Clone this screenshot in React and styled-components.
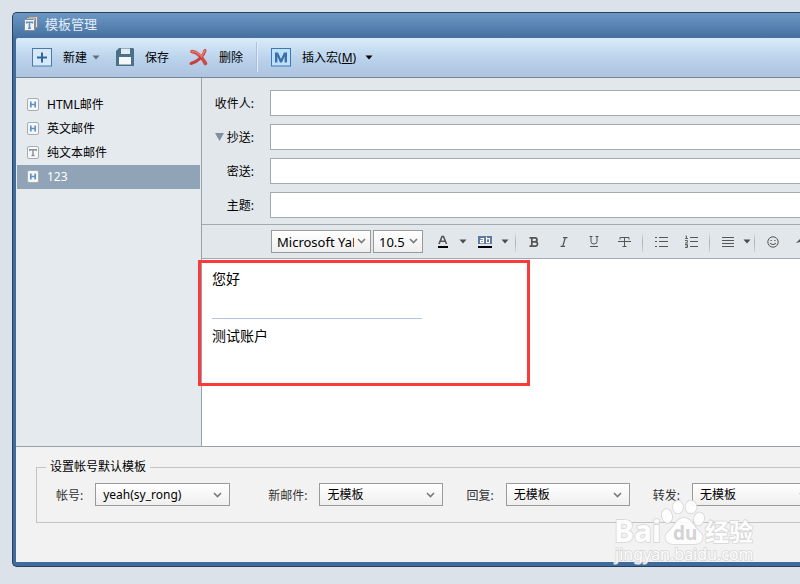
import { useState } from "react";
import styled, { createGlobalStyle } from "styled-components";

const templates = [
  { id: "html", name: "HTML邮件", type: "H" },
  { id: "en", name: "英文邮件", type: "H" },
  { id: "text", name: "纯文本邮件", type: "T" },
  { id: "123", name: "123", type: "H" },
];

const Caret = ({ color = "#4c4c4c" }) => (
  <svg width="8" height="5" viewBox="0 0 8 5">
    <path d="M0.5 0.5h7L4 4.5z" fill={color} />
  </svg>
);

const TemplateIcon = ({ type }) => (
  <svg width="12" height="13" viewBox="0 0 12 13">
    <rect x="0.5" y="0.5" width="11" height="12" rx="1.5" fill="#f6f7f8" stroke="#a9adb1" />
    {type === "H" ? (
      <path d="M3.8 3.5v6M8.2 3.5v6M3.8 6.5h4.4" stroke="#5b94cb" strokeWidth="1.7" fill="none" />
    ) : (
      <path d="M2.8 5V3.8h6.4V5M6 3.8v5.8M4.5 9.5h3" stroke="#8f9396" strokeWidth="1.5" fill="none" />
    )}
  </svg>
);

const SelectBox = ({ id, options, width, label, tight }) => (
  <SelectWrap $width={width} $tight={tight}>
    <Select id={id} aria-label={label} $tight={tight}>
      {options.map((option) => (
        <option key={option}>{option}</option>
      ))}
    </Select>
    <svg width="9" height="6" viewBox="0 0 9 6">
      <path d="M1 1l3.5 3.5L8 1" fill="none" stroke="#7a7a7a" strokeWidth="1.6" />
    </svg>
  </SelectWrap>
);

const App = () => {
  const [selected, setSelected] = useState("123");

  return (
    <>
      <GlobalStyle />
      <Page>
        <Window>
          <TitleBar>
            <svg width="14" height="15" viewBox="0 0 14 15">
              <path d="M4.5 3V0.5h9v11H11" fill="#dfe3e6" stroke="#858b91" />
              <path d="M2.5 4V2h9v11H10" fill="#e6e9ec" stroke="#858b91" />
              <rect x="0.5" y="3.5" width="10" height="11" rx="1" fill="#f1f3f5" stroke="#858b91" />
              <path d="M2.600 7.500V6.300h5.800V7.500M5.500 6.300v6M4 12.200h3" fill="none" stroke="#5b94cb" strokeWidth="1.600" />
            </svg>
            <Title>模板管理</Title>
          </TitleBar>

          <Toolbar>
            <ToolButton>
              <svg width="20" height="19" viewBox="0 0 20 19">
                <rect x="0.5" y="0.5" width="19" height="17.5" fill="#d7e9f9" stroke="#4a7aa9" />
                <path d="M10 4.5v10M5 9.5h10" stroke="#2f66a0" strokeWidth="2" />
              </svg>
              新建
              <CaretSlot>
                <Caret color="#5f6f80" />
              </CaretSlot>
            </ToolButton>
            <ToolButton>
              <svg width="18" height="18" viewBox="0 0 18 18">
                <path d="M3 0h14l1 1v17H0V3z" fill="#4d7089" />
                <path d="M5 0.5h9V6H5z" fill="#dfeaf2" />
                <path d="M3 9h12v7.5H3z" fill="#f3f7fa" />
              </svg>
              保存
            </ToolButton>
            <ToolButton>
              <svg width="23" height="18" viewBox="0 0 23 18">
                <path d="M7 3.500C12 4 16 7.500 20.500 15.500" fill="none" stroke="#cf4a45" strokeWidth="3.600" strokeLinecap="round" />
                <path d="M20 2.500C18.500 8 13 13.500 6 15.500" fill="none" stroke="#c8403d" strokeWidth="3" strokeLinecap="round" />
                <path d="M7 3.200C11 3.700 14 5.500 16.500 8.500L19.800 2.500" fill="none" stroke="#e67970" strokeWidth="1.600" strokeLinecap="round" />
              </svg>
              删除
            </ToolButton>
            <ToolDivider />
            <ToolButton>
              <svg width="20" height="19" viewBox="0 0 20 19">
                <rect x="0.5" y="0.5" width="19" height="17.500" fill="#bfe0fa" stroke="#3f77b0" />
                <path d="M4 14.500V4.500h3L10 11l3-6.500h3v10h-2.400V8.500L11 14.500H9L6.400 8.500v6z" fill="#3a70ad" />
              </svg>
              <span>
                插入宏(<u>M</u>)
              </span>
              <CaretSlot $far>
                <Caret color="#000" />
              </CaretSlot>
            </ToolButton>
          </Toolbar>

          <Workspace>
            <Sidebar>
              {templates.map((item) => (
                <TemplateItem
                  key={item.id}
                  $active={item.id === selected}
                  onClick={() => setSelected(item.id)}
                >
                  <TemplateIcon type={item.type} />
                  {item.name}
                </TemplateItem>
              ))}
            </Sidebar>

            <Compose>
              <Headers>
                <HeaderRow>
                  <label htmlFor="to">收件人:</label>
                  <input id="to" />
                </HeaderRow>
                <HeaderRow>
                  <label htmlFor="cc">
                    <svg width="9" height="8" viewBox="0 0 9 8">
                      <path d="M0 0h9L4.500 8z" fill="#7d90a4" />
                    </svg>
                    抄送:
                  </label>
                  <input id="cc" />
                </HeaderRow>
                <HeaderRow>
                  <label htmlFor="bcc">密送:</label>
                  <input id="bcc" />
                </HeaderRow>
                <HeaderRow>
                  <label htmlFor="subject">主题:</label>
                  <input id="subject" />
                </HeaderRow>
              </Headers>

              <FormatBar>
                <FontPickers>
                  <SelectBox label="字体" width={100} options={["Microsoft YaHei"]} tight />
                  <SelectBox label="字号" width={50} options={["10.5"]} tight />
                </FontPickers>
                <FormatGroup>
                  <FormatButton $width={20} aria-label="文字颜色">
                    <svg width="12" height="13" viewBox="0 0 12 13">
                      <path d="M2 9L5 1.500h1.500L9.500 9M3.500 6.300h4.500" fill="none" stroke="#555" strokeWidth="1.600" />
                      <path d="M1 11h10v2H1z" fill="#000" />
                    </svg>
                  </FormatButton>
                  <FormatButton $width={20} aria-label="选择文字颜色">
                    <Caret />
                  </FormatButton>
                </FormatGroup>
                <FormatGroup>
                  <FormatButton $width={20} aria-label="背景颜色">
                    <svg width="14" height="12" viewBox="0 0 14 12">
                      <rect width="14" height="8" fill="#5b7b9e" />
                      <path d="M2.500 2.600h3v4h-3v-2h3M8.500 0.800v5.800h3v-4h-3" fill="none" stroke="#fff" strokeWidth="1.100" />
                      <rect y="10" width="14" height="2" fill="#000" />
                    </svg>
                  </FormatButton>
                  <FormatButton $width={20} aria-label="选择背景颜色">
                    <Caret />
                  </FormatButton>
                </FormatGroup>
                <FormatDivider $flush />
                <FormatButton aria-label="加粗">
                  <svg width="10" height="10" viewBox="0 0 10 10">
                    <path d="M0.500 0.800H6a2 2 0 0 1 0 4H3M3 4.800h3.300a2.200 2.200 0 0 1 0 4.400H0.500M2.800 0.800v8.400" fill="none" stroke="#555" strokeWidth="1.700" />
                  </svg>
                </FormatButton>
                <FormatButton aria-label="斜体">
                  <svg width="8" height="10" viewBox="0 0 8 10">
                    <path d="M3 0.600h4.500M0.500 9.400H5M5.300 0.600L2.700 9.400" fill="none" stroke="#555" strokeWidth="1.300" />
                  </svg>
                </FormatButton>
                <FormatButton aria-label="下划线">
                  <svg width="10" height="11" viewBox="0 0 10 11">
                    <path d="M0.500 0.500h3M6.500 0.500h3M2 0.500v5a3 2.500 0 0 0 6 0v-5M1 10.500h8" fill="none" stroke="#555" />
                  </svg>
                </FormatButton>
                <FormatButton aria-label="删除线">
                  <svg width="13" height="10" viewBox="0 0 13 10">
                    <path d="M2 2.500v-2h9v2M6.500 0.500v9M4.500 9.500h4M0 4.500h13" fill="none" stroke="#555" />
                  </svg>
                </FormatButton>
                <FormatDivider />
                <FormatButton aria-label="项目符号">
                  <svg width="13" height="10" viewBox="0 0 13 10">
                    <path d="M0 0.500h2M4 0.500h9M0 4.500h2M4 4.500h9M0 9.500h2M4 9.500h9" fill="none" stroke="#555" />
                  </svg>
                </FormatButton>
                <FormatButton aria-label="编号">
                  <svg width="13" height="13" viewBox="0 0 13 13">
                    <path d="M5 2.500h8M5 6.500h8M5 11.500h8" fill="none" stroke="#555" />
                    <path d="M0.500 1h1v2.500M0 3.500h3M0 5.500h2.500v1.200L0.500 8H3M0 9.500h2.500v3H0M0.500 11h2" fill="none" stroke="#555" strokeWidth="0.900" />
                  </svg>
                </FormatButton>
                <FormatDivider />
                <FormatGroup>
                  <FormatButton aria-label="对齐">
                    <svg width="12" height="10" viewBox="0 0 12 10">
                      <path d="M0 0.500h12M0 3.500h12M0 6.500h12M0 9.500h12" fill="none" stroke="#555" />
                    </svg>
                  </FormatButton>
                  <FormatButton $width={8} aria-label="选择对齐方式">
                    <Caret />
                  </FormatButton>
                </FormatGroup>
                <FormatDivider />
                <FormatButton aria-label="表情">
                  <svg width="12" height="12" viewBox="0 0 12 12">
                    <circle cx="6" cy="6" r="5.200" fill="none" stroke="#555" />
                    <path d="M3.500 4.500h1.300M7.200 4.500h1.300M3.300 7c1 2 4.400 2 5.400 0" fill="none" stroke="#555" strokeWidth="1.200" />
                  </svg>
                </FormatButton>
                <FormatButton aria-label="图片">
                  <svg width="14" height="10" viewBox="0 0 14 10">
                    <path d="M0 6l4-4 3 3 2-2 5 6H4V5z" fill="#555" />
                  </svg>
                </FormatButton>
              </FormatBar>

              <EditorArea>
                <Editor contentEditable suppressContentEditableWarning>
                  <p>您好</p>
                  <hr />
                  <p>测试账户</p>
                </Editor>
                <Highlight />
              </EditorArea>
            </Compose>
          </Workspace>

          <Defaults>
            <fieldset>
              <legend>设置帐号默认模板</legend>
              <Field $wide>
                <label htmlFor="account">帐号:</label>
                <SelectBox id="account" width={135} options={["yeah(sy_rong)"]} />
              </Field>
              <Field>
                <label htmlFor="new-mail">新邮件:</label>
                <SelectBox id="new-mail" width={124} options={["无模板"]} />
              </Field>
              <Field>
                <label htmlFor="reply">回复:</label>
                <SelectBox id="reply" width={124} options={["无模板"]} />
              </Field>
              <Field>
                <label htmlFor="forward">转发:</label>
                <SelectBox id="forward" width={124} options={["无模板"]} />
              </Field>
            </fieldset>
          </Defaults>
        </Window>

        <Watermark width="144" height="72" viewBox="0 0 144 72">
          <g fill="#fff" stroke="#d2d2d2" strokeWidth="1.500" paintOrder="stroke">
            <ellipse cx="54" cy="16" rx="5" ry="7" transform="rotate(-12 54 16)" />
            <ellipse cx="65" cy="7" rx="5" ry="6.500" />
            <ellipse cx="78" cy="7" rx="5.500" ry="6.500" />
            <ellipse cx="86" cy="19" rx="5" ry="6.500" transform="rotate(15 86 19)" />
            <path d="M71 18c7 0 9 7 13 11s7 6 5 11c-2 5-9 4-18 4s-16 1-18-4c-2-5 1-7 5-11s6-11 13-11z" />
            <text x="1" y="42" fontSize="30" fontWeight="700">Bai</text>
            <text x="92" y="41" fontSize="24" fontWeight="700">经验</text>
            <text x="2" y="60" fontSize="16">jingyan.baidu.com</text>
          </g>
          <text x="60" y="40" fontSize="19" fontWeight="700" fill="#d0d0d0">du</text>
        </Watermark>
      </Page>
    </>
  );
};

const GlobalStyle = createGlobalStyle`
  * {
    box-sizing: border-box;
  }

  body {
    margin: 0;
    background: #dbe2ea;
  }

  body, button, input, select {
    font-family: "Noto Sans", "Noto Sans CJK SC", sans-serif;
    font-size: 12px;
    color: #000;
  }

  button {
    border: 0;
    padding: 0;
    background: none;
  }

  svg {
    flex: none;
  }
`;

const Page = styled.div`
  display: flex;
  position: relative;
  min-height: 100vh;
  padding: 12px 0 17px 12px;
  overflow: hidden;
`;

const Window = styled.div`
  display: flex;
  flex: 1;
  flex-direction: column;
  min-width: 0;
  border: 1px solid #29415c;
  border-right: 0;
  border-radius: 5px 0 0 5px;
  padding: 0 0 4px 3px;
  background: #416b9c;
  overflow: hidden;
`;

const TitleBar = styled.header`
  display: flex;
  align-items: center;
  gap: 7px;
  height: 25px;
  margin-left: -3px;
  padding: 0 0 4px 11px;
  background: linear-gradient(#6d98c6, #44709f);
`;

const Title = styled.h1`
  margin: 0;
  font-size: 13px;
  font-weight: 400;
  line-height: 20px;
  color: #e4edf7;
`;

const Toolbar = styled.div`
  display: flex;
  align-items: center;
  gap: 16px;
  height: 40px;
  padding: 0 0 1px 16px;
  border-bottom: 1px solid #75879b;
  border-radius: 2px 0 0 0;
  background: linear-gradient(#daecfb, #b9d1ea 55%, #aec4df);
`;

const ToolButton = styled.button`
  display: flex;
  align-items: center;
  gap: 11px;
  white-space: nowrap;
`;

const CaretSlot = styled.span`
  display: flex;
  margin-left: ${({ $far }) => ($far ? "-2px" : "-6px")};
`;

const ToolDivider = styled.div`
  width: 2px;
  height: 30px;
  margin: 0 -3px;
  border-left: 1px solid #a8c0e0;
  border-right: 1px solid #e4eef8;
`;

const Workspace = styled.div`
  display: flex;
  flex: 1;
  border-bottom: 1px solid #9aa2a9;
`;

const Sidebar = styled.nav`
  flex: none;
  width: 186px;
  padding: 15px 1px 0;
  border-right: 1px solid #9aa2a9;
  background: #e5eaee;
`;

const TemplateItem = styled.button`
  display: flex;
  align-items: center;
  gap: 8px;
  width: 100%;
  height: 24px;
  padding: 0 0 2px 10px;
  color: ${({ $active }) => ($active ? "#fff" : "#000")};
  background: ${({ $active }) => ($active ? "#90a3b7" : "none")};
`;

const Compose = styled.main`
  display: flex;
  flex: 1;
  flex-direction: column;
  min-width: 0;
  background: #e2e7eb;
`;

const Headers = styled.div`
  display: grid;
  gap: 8px;
  padding: 12px 0 6px;
  border-bottom: 1px solid #a3a9ae;
`;

const HeaderRow = styled.div`
  display: flex;
  align-items: center;

  label {
    display: flex;
    flex: none;
    justify-content: flex-end;
    align-items: center;
    gap: 3px;
    width: 68px;
    padding-right: 16px;
  }

  input {
    flex: 1;
    height: 26px;
    border: 1px solid #a3a9ae;
    border-right: 0;
    padding: 0 6px;
    background: #fff;
  }
`;

const FormatBar = styled.div`
  display: flex;
  align-items: center;
  height: 34px;
  padding-left: 69px;
  border-bottom: 1px solid #a3a9ae;
  overflow: hidden;
`;

const FontPickers = styled.div`
  display: flex;
  flex: none;
  gap: 2px;
  margin-right: 10px;
`;

const SelectWrap = styled.div`
  position: relative;
  flex: none;
  width: ${({ $width }) => $width}px;

  svg {
    position: absolute;
    top: ${({ $tight }) => ($tight ? "8px" : "9px")};
    right: ${({ $tight }) => ($tight ? "5px" : "8px")};
    pointer-events: none;
  }
`;

const Select = styled.select`
  display: block;
  width: 100%;
  height: 23px;
  appearance: none;
  border: 1px solid #9a9a9a;
  border-radius: 0;
  padding: ${({ $tight }) => ($tight ? "0 16px 0 5px" : "0 20px 0 7px")};
  font-size: ${({ $tight }) => ($tight ? "13px" : "12px")};
  background: linear-gradient(#fff, #efefef);
`;

const FormatGroup = styled.div`
  display: flex;
  flex: none;

  & + & {
    margin-left: 2px;
  }
`;

const FormatButton = styled.button`
  display: flex;
  flex: none;
  justify-content: center;
  align-items: center;
  width: ${({ $width = 30 }) => $width}px;
  height: 22px;
`;

const FormatDivider = styled.div`
  flex: none;
  width: 1px;
  height: 20px;
  margin: 0 3px 0 ${({ $flush }) => ($flush ? "0" : "3px")};
  background: linear-gradient(#e2e7eb, #a9afb4 50%, #cfd4d8);
`;

const EditorArea = styled.div`
  display: flex;
  position: relative;
  flex: 1;
  background: #fff;
`;

const Editor = styled.div`
  flex: 1;
  padding: 10px;
  font-size: 14px;
  line-height: 20px;
  outline: none;

  p {
    margin: 0;
  }

  hr {
    width: 210px;
    height: 1px;
    margin: 29px 0 7px;
    border: 0;
    background: #b5c4df;
  }
`;

const Highlight = styled.div`
  position: absolute;
  top: 1px;
  left: -4px;
  width: 332px;
  height: 126px;
  border: 3px solid #fb3a3a;
  pointer-events: none;
`;

const Defaults = styled.section`
  padding: 11px 0 39px 20px;
  background: #f2f2f2;

  fieldset {
    display: flex;
    gap: 23px;
    min-width: 0;
    margin: 0;
    border: 1px solid #c3c3c3;
    border-right: 0;
    padding: 7px 0 16px 19px;
    overflow: hidden;
  }

  legend {
    margin-left: -10px;
    padding: 0 4px;
    line-height: 18px;
  }
`;

const Field = styled.div`
  display: flex;
  flex: none;
  align-items: center;
  gap: 12px;
  margin-right: ${({ $wide }) => ($wide ? "15px" : "0")};

  label {
    color: #333;
  }
`;

const Watermark = styled.svg`
  position: absolute;
  right: 43px;
  bottom: 12px;
  pointer-events: none;
  opacity: 0.9;
`;

export default App;
